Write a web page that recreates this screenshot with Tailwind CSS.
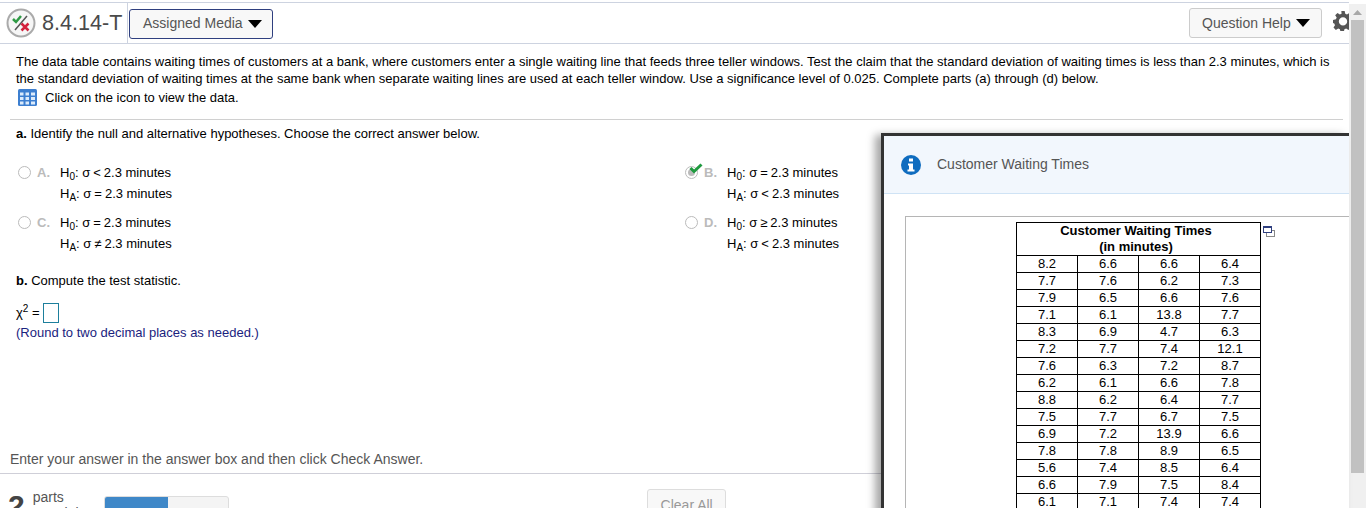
<!DOCTYPE html>
<html lang="en">
<head>
<meta charset="UTF-8">
<title>8.4.14-T</title>
<script src="https://cdn.jsdelivr.net/npm/@tailwindcss/browser@4"></script>
</head>
<body class="bg-white font-['Liberation_Sans',Arial,sans-serif] text-[13px] text-black">
<div class="relative h-[508px] w-[1366px] overflow-hidden">

  <!-- main column -->
  <div class="w-[1349px] pt-[2px]">
    <div class="h-[42px] border-y border-[#cdd3e0] flex items-center relative">
      <svg class="ml-[6px] w-[30px] h-[30px] shrink-0" viewBox="0 0 30 30">
        <circle cx="15" cy="15" r="13.5" fill="#f6f6f6" stroke="#aaa" stroke-width="2"/>
        <path d="M7 11l3 3 5-6" fill="none" stroke="#2f9a45" stroke-width="2.500"/>
        <path d="M9 22L21 8" stroke="#555" stroke-width="1.500"/>
        <path d="M15.500 15.500l7 7M22.500 15.500l-7 7" stroke="#d4213d" stroke-width="2.500"/>
      </svg>
      <span class="ml-[6px] text-[21.6px] text-[#4a4a4a] w-[85px]">8.4.14-T</span>
      <div class="h-[40px] w-px bg-[#cdd3e0]"></div>
      <div class="ml-[1px] mt-[1px] h-[30px] w-[144px] border border-[#2f3f7f] rounded-[3px] bg-[#f8f8f8] flex items-center pl-[13px] text-[14px] text-[#555]">
        Assigned Media
        <svg class="ml-[5px] w-[14px] h-[8px]" viewBox="0 0 14 8"><path d="M0 0h14L7 8z" fill="#000"/></svg>
      </div>
      <div class="ml-auto mr-[27px] -mt-[1px] h-[30px] w-[133px] border border-[#ccc] rounded-[3px] bg-[#f8f8f8] flex items-center pl-[12px] text-[14px] text-[#555]">
        <span class="mt-[1px]">Question Help</span>
        <svg class="ml-[5px] w-[14px] h-[8px]" viewBox="0 0 14 8"><path d="M0 0h14L7 8z" fill="#000"/></svg>
      </div>
      <div class="absolute left-[1333px] top-[8px] w-[20px] h-[20px]">
        <svg class="w-[20px] h-[20px]" viewBox="0 0 24 24"><path fill="#555" fill-rule="evenodd" d="M10 0h4l.7 3.200 2.100.9 2.800-1.800 2.800 2.800-1.800 2.800.9 2.100L24 10.700v3.600l-3.500.7-.9 2.100 1.800 2.800-2.800 2.800-2.800-1.800-2.100.9-.7 3.200h-4l-.7-3.200-2.100-.9-2.800 1.800-2.800-2.800 1.800-2.800-.9-2.100L0 14.300v-3.600l3.500-.7.9-2.100-1.800-2.800 2.800-2.800 2.800 1.800 2.100-.9zM12 7.500a5 5 0 100 10 5 5 0 000-10z"/></svg>
      </div>
    </div>

    <div class="px-[16px] pt-[9px]">
      <p class="leading-[17px] w-[1320px]">The data table contains waiting times of customers at a bank, where customers enter a single waiting line that feeds three teller windows. Test the claim that the standard deviation of waiting times is less than 2.3 minutes, which is the standard deviation of waiting times at the same bank when separate waiting lines are used at each teller window. Use a significance level of 0.025. Complete parts (a) through (d) below.</p>
      <div class="flex items-center mt-[1px] h-[19px]">
        <svg class="ml-[2px] w-[19px] h-[17px]" viewBox="0 0 19 17"><rect width="19" height="17" rx="1.500" fill="#3d7fd0"/><path d="M2 3.500h3.500V6.500H2zM7.500 3.500H11V6.500H7.500zM13 3.500h4V6.500h-4zM2 8h3.500v3H2zM7.500 8H11v3H7.500zM13 8h4v3h-4zM2 12.500h3.500v3H2zM7.500 12.500H11v3H7.500zM13 12.500h4v3h-4z" fill="#dcebfb"/></svg>
        <span class="ml-[8px]">Click on the icon to view the data.</span>
      </div>
      <div class="mt-[12px] h-px bg-[#d0d0d0] w-[1333px] -ml-[6px]"></div>
      <p class="mt-[5px] leading-[17px]"><b>a.</b> Identify the null and alternative hypotheses. Choose the correct answer below.</p>

      <div class="grid grid-cols-[667px_1fr] mt-[22px] gap-y-[10px]">
        <div class="flex">
          <div class="w-[13px] h-[13px] mt-[2px] ml-[2px] rounded-full border border-[#bbb]"></div>
          <span class="ml-[6px] w-[23px] font-bold text-[#bbb] leading-[17px]">A.</span>
          <div class="leading-[21px] -mt-[2px]">
            <div>H<sub class="text-[10px]">0</sub>: σ<span class="mx-[3px]">&lt;</span>2.3 minutes</div>
            <div>H<sub class="text-[10px]">A</sub>: σ<span class="mx-[3px]">=</span>2.3 minutes</div>
          </div>
        </div>
        <div class="flex relative">
          <div class="w-[13px] h-[13px] mt-[2px] ml-[2px] rounded-full border border-[#bbb] flex items-center justify-center"><div class="w-[7px] h-[7px] rounded-full bg-[#bbb]"></div></div>
          <svg class="absolute left-[6px] -top-[1px] w-[14px] h-[11px]" viewBox="0 0 14 11"><path d="M1.500 5l3.500 3.500L12.500 1.500" fill="none" stroke="#1f9a3f" stroke-width="3"/></svg>
          <span class="ml-[6px] w-[23px] font-bold text-[#bbb] leading-[17px]">B.</span>
          <div class="leading-[21px] -mt-[2px]">
            <div>H<sub class="text-[10px]">0</sub>: σ<span class="mx-[3px]">=</span>2.3 minutes</div>
            <div>H<sub class="text-[10px]">A</sub>: σ<span class="mx-[3px]">&lt;</span>2.3 minutes</div>
          </div>
        </div>
        <div class="flex">
          <div class="w-[13px] h-[13px] mt-[2px] ml-[2px] rounded-full border border-[#bbb]"></div>
          <span class="ml-[6px] w-[23px] font-bold text-[#bbb] leading-[17px]">C.</span>
          <div class="leading-[21px] -mt-[2px]">
            <div>H<sub class="text-[10px]">0</sub>: σ<span class="mx-[3px]">=</span>2.3 minutes</div>
            <div>H<sub class="text-[10px]">A</sub>: σ<span class="mx-[3px]">≠</span>2.3 minutes</div>
          </div>
        </div>
        <div class="flex">
          <div class="w-[13px] h-[13px] mt-[2px] ml-[2px] rounded-full border border-[#bbb]"></div>
          <span class="ml-[6px] w-[23px] font-bold text-[#bbb] leading-[17px]">D.</span>
          <div class="leading-[21px] -mt-[2px]">
            <div>H<sub class="text-[10px]">0</sub>: σ<span class="mx-[3px]">≥</span>2.3 minutes</div>
            <div>H<sub class="text-[10px]">A</sub>: σ<span class="mx-[3px]">&lt;</span>2.3 minutes</div>
          </div>
        </div>
      </div>

      <p class="mt-[18px] leading-[17px]"><b>b.</b> Compute the test statistic.</p>
      <div class="mt-[15px] flex items-center h-[17px]">
        <span>χ<sup class="text-[10px]">2</sup> =</span>
        <div class="ml-[3px] w-[16px] h-[20px] border border-[#1d7f9c]"></div>
      </div>
      <p class="mt-[3px] leading-[17px] text-[#1a237e]">(Round to two decimal places as needed.)</p>
    </div>

    <p class="mt-[110px] pl-[10px] leading-[17px] text-[14px] text-[#555]">Enter your answer in the answer box and then click Check Answer.</p>
    <div class="mt-[5px] h-px bg-[#cfcfd8]"></div>
    <div class="flex items-start mt-[15px] h-[40px]">
      <span class="ml-[8px] text-[30px] leading-[34px] font-bold text-[#444]">2</span>
      <div class="ml-[8px] leading-[16px] text-[14px] text-[#555]">parts<br>remaining</div>
      <div class="ml-[10px] mt-[7px] h-[20px] w-[125px] rounded-[3px] border border-[#ddd] bg-[#f4f4f4] overflow-hidden"><div class="w-[63px] h-full bg-[#3f88c8]"></div></div>
      <div class="ml-[418px] h-[30px] w-[79px] rounded-[3px] border border-[#ddd] bg-[#f8f8f8] pt-[5px] text-center text-[14px] text-[#999]">Clear All</div>
    </div>
  </div>

  <!-- scrollbar -->
  <div class="absolute right-0 top-[4px] bottom-0 w-[17px] bg-[#f0f0f0]">
    <svg class="absolute left-[4px] top-[6px] w-[9px] h-[5px]" viewBox="0 0 9 5"><path d="M0 5L4.500 0 9 5z" fill="#a8a8a8"/></svg>
    <div class="absolute left-[2px] top-[16px] h-[453px] w-[13px] bg-[#c1c1c1]"></div>
  </div>

  <!-- data dialog -->
  <div class="absolute left-[881px] top-[133px] w-[468px] h-[400px] bg-white border-l-[3px] border-t-[3px] border-[#333] shadow-[-6px_2px_8px_rgba(0,0,0,0.35)]">
    <div class="h-[58px] bg-[#f2f7fd] border-b border-[#cfe3f5] flex items-center">
      <svg class="ml-[17px] w-[20px] h-[20px]" viewBox="0 0 20 20"><circle cx="10" cy="10" r="10" fill="#0f6cbf"/><rect x="8" y="3.500" width="4" height="3" fill="#fff"/><path d="M7 8.500h5v6h1.500v2h-7v-2H8v-4H7z" fill="#fff"/></svg>
      <span class="ml-[16px] text-[14px] text-[#555]">Customer Waiting Times</span>
    </div>
    <div class="mt-[22px] ml-[21px] h-[320px] border-l border-t border-[#b5b5b5] pl-[110px] pt-[5px] relative">
      <table class="border-collapse border border-black text-[13px] leading-[15px] text-center w-[245px] table-fixed">
        <tr><th colspan="4" class="border border-black font-bold leading-[16px] pr-[5px]">Customer Waiting Times<br>(in minutes)</th></tr>
        <tr class="h-[17px] align-top"><td class="border border-black">8.2</td><td class="border border-black">6.6</td><td class="border border-black">6.6</td><td class="border border-black">6.4</td></tr>
        <tr class="h-[17px] align-top"><td class="border border-black">7.7</td><td class="border border-black">7.6</td><td class="border border-black">6.2</td><td class="border border-black">7.3</td></tr>
        <tr class="h-[17px] align-top"><td class="border border-black">7.9</td><td class="border border-black">6.5</td><td class="border border-black">6.6</td><td class="border border-black">7.6</td></tr>
        <tr class="h-[17px] align-top"><td class="border border-black">7.1</td><td class="border border-black">6.1</td><td class="border border-black">13.8</td><td class="border border-black">7.7</td></tr>
        <tr class="h-[17px] align-top"><td class="border border-black">8.3</td><td class="border border-black">6.9</td><td class="border border-black">4.7</td><td class="border border-black">6.3</td></tr>
        <tr class="h-[17px] align-top"><td class="border border-black">7.2</td><td class="border border-black">7.7</td><td class="border border-black">7.4</td><td class="border border-black">12.1</td></tr>
        <tr class="h-[17px] align-top"><td class="border border-black">7.6</td><td class="border border-black">6.3</td><td class="border border-black">7.2</td><td class="border border-black">8.7</td></tr>
        <tr class="h-[17px] align-top"><td class="border border-black">6.2</td><td class="border border-black">6.1</td><td class="border border-black">6.6</td><td class="border border-black">7.8</td></tr>
        <tr class="h-[17px] align-top"><td class="border border-black">8.8</td><td class="border border-black">6.2</td><td class="border border-black">6.4</td><td class="border border-black">7.7</td></tr>
        <tr class="h-[17px] align-top"><td class="border border-black">7.5</td><td class="border border-black">7.7</td><td class="border border-black">6.7</td><td class="border border-black">7.5</td></tr>
        <tr class="h-[17px] align-top"><td class="border border-black">6.9</td><td class="border border-black">7.2</td><td class="border border-black">13.9</td><td class="border border-black">6.6</td></tr>
        <tr class="h-[17px] align-top"><td class="border border-black">7.8</td><td class="border border-black">7.8</td><td class="border border-black">8.9</td><td class="border border-black">6.5</td></tr>
        <tr class="h-[17px] align-top"><td class="border border-black">5.6</td><td class="border border-black">7.4</td><td class="border border-black">8.5</td><td class="border border-black">6.4</td></tr>
        <tr class="h-[17px] align-top"><td class="border border-black">6.6</td><td class="border border-black">7.9</td><td class="border border-black">7.5</td><td class="border border-black">8.4</td></tr>
        <tr class="h-[17px] align-top"><td class="border border-black">6.1</td><td class="border border-black">7.1</td><td class="border border-black">7.4</td><td class="border border-black">7.4</td></tr>
      </table>
      <svg class="absolute left-[357px] top-[9px] w-[12px] h-[11px]" viewBox="0 0 12 11"><rect x="3.500" y="4.500" width="8" height="6" fill="#fff" stroke="#888"/><rect x="0.500" y="0.500" width="8" height="6" fill="#fff" stroke="#2f3f7f"/><rect x="0" y="0" width="9" height="2" fill="#2f3f7f"/></svg>
    </div>
  </div>
</div>
</body>
</html>
